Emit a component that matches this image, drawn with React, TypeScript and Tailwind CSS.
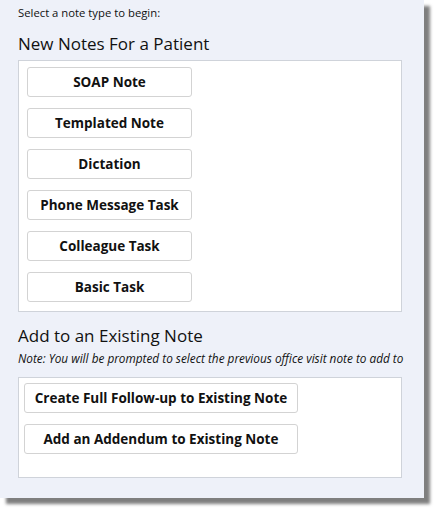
const newNotes = ['SOAP Note', 'Templated Note', 'Dictation', 'Phone Message Task', 'Colleague Task', 'Basic Task'];
const existing = ['Create Full Follow-up to Existing Note', 'Add an Addendum to Existing Note'];

function NoteButton({ label, wide }: { label: string; wide?: boolean }) {
    return (
        <button
            className={`${wide ? 'w-[274px]' : 'w-[165px]'} h-[30px] shrink-0 bg-white border border-[#d3d3d3] rounded-[3px] text-[13.5px] font-bold text-[#111] flex items-center justify-center`}
        >
            {label}
        </button>
    );
}

export default function App() {
    return (
        <div className="w-[439px] h-[514px] bg-white" style={{ fontFamily: '"Open Sans", "Noto Sans", sans-serif' }}>
            <div className="w-[424px] h-[498px] bg-[#eef1f9] px-[18px] pt-[5px] shadow-[6px_6px_3px_rgba(0,0,0,0.5)] flex flex-col">
                {/* Intro */}
                <p className="text-[11.3px] leading-[16px] text-[#111]">Select a note type to begin:</p>
                <h2 className="mt-[11px] text-[17px] leading-[24px] text-[#111]">New Notes For a Patient</h2>

                {/* New notes */}
                <div className="mt-[4px] w-[384px] h-[252px] bg-white border border-[#cfd3da] pl-[8px] pt-[6px] flex flex-col gap-[11px]">
                    {newNotes.map(n => (
                        <NoteButton key={n} label={n} />
                    ))}
                </div>

                {/* Existing */}
                <h2 className="mt-[12px] text-[17px] leading-[24px] text-[#111]">Add to an Existing Note</h2>
                <p className="mt-[2px] text-[11.8px] leading-[16px] italic text-[#111]">
                    Note: You will be prompted to select the previous office visit note to add to
                </p>
                <div className="mt-[11px] w-[384px] h-[101px] bg-white border border-[#cfd3da] pl-[5px] pt-[5px] flex flex-col gap-[11px]">
                    {existing.map(n => (
                        <NoteButton key={n} label={n} wide />
                    ))}
                </div>
            </div>
        </div>
    );
}
